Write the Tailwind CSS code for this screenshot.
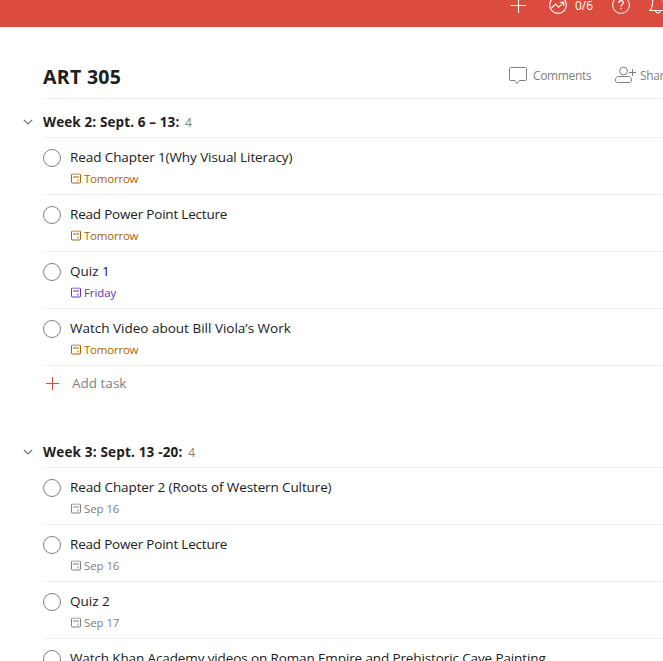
<!DOCTYPE html>
<html lang="en">
<head>
<meta charset="utf-8">
<title>ART 305</title>
<script src="https://cdn.jsdelivr.net/npm/@tailwindcss/browser@4"></script>
</head>
<body class="w-[663px] h-[661px] overflow-hidden bg-white text-[#202020] font-['Open_Sans','Noto_Sans',sans-serif] text-[13.5px]">
<svg class="hidden">
  <symbol id="cal" viewBox="0 0 11 11"><rect x=".5" y=".5" width="9" height="9" rx="1" fill="none" stroke="currentColor"/><path d="M2 3.500h6" stroke="currentColor"/><path d="M6 6h2v2H6z" fill="currentColor" opacity=".5"/></symbol>
  <symbol id="chev" viewBox="0 0 10 6"><path d="M.8.8 5 5 9.200.8" fill="none" stroke="#707070" stroke-width="1.200"/></symbol>
</svg>
<div class="flex h-[661px] flex-col overflow-hidden">
  <header class="relative h-[27px] shrink-0 overflow-hidden bg-[#dc4c3e] text-white">
    <div class="flex h-[12px] items-center pl-[510px]">
      <svg class="h-4 w-4 shrink-0 -translate-y-[1px]" viewBox="0 0 16 16" fill="none" stroke="currentColor" stroke-width="1.1"><path d="M8.500 0v16M.5 8.500h16"/></svg>
      <svg class="ml-[23px] h-[18px] w-[18px] shrink-0 -translate-y-[1px]" viewBox="0 0 18 18" fill="none" stroke="currentColor" stroke-width="1.100"><circle cx="9" cy="9" r="8.400"/><path d="M2.500 12.200 6.600 8l3 3.300L14.500 6.400M10.800 6.300h3.900v3.900"/></svg>
      <span class="ml-2 w-[20px] shrink-0 text-[12px] leading-[12px]">0/6</span>
      <svg class="ml-[17px] h-[18px] w-[18px] shrink-0 -translate-y-[1px]" viewBox="0 0 18 18" fill="none" stroke="currentColor" stroke-width="1"><circle cx="9" cy="9" r="8.400"/><path d="M6.700 7.100C6.700 5.500 7.700 4.700 9 4.700s2.300.8 2.300 2c0 1.700-2.300 1.800-2.300 4M9 12v1.300" stroke-width="1.200"/></svg>
      <svg class="ml-[19px] h-5 w-[18px] shrink-0 -translate-y-[1px]" viewBox="0 0 18 20" fill="none" stroke="currentColor" stroke-width="1.100"><path d="M1 15.500c2-2 2.500-3.500 2.500-8C3.500 4 5.500 2 9 2s5.500 2 5.500 5.500c0 4.500.5 6 2.500 8zM6.500 15.700c.3 1.600 1.200 2.300 2.500 2.300s2.200-.7 2.500-2.300"/></svg>
    </div>
  </header>
  <div class="ml-[43px] mt-[27px] flex h-[45px] w-[700px] shrink-0 items-center border-b border-[#efefef]">
    <h1 class="w-[466px] pt-[1px] text-[19.500px] leading-[26px] font-bold tracking-[0.3px]">ART 305</h1>
    <div class="flex items-center text-[12px] tracking-[-0.35px] text-[#808080]">
      <svg class="h-[18px] w-[18px]" viewBox="0 0 18 18" fill="none" stroke="currentColor"><path d="M1.500.5h15q1 0 1 1v11q0 1-1 1h-6L8 16.600l-2-3.100H1.500q-1 0-1-1v-11q0-1 1-1z"/></svg>
      <span class="ml-[6px] w-[59px]">Comments</span>
      <svg class="ml-[23px] h-[18px] w-[22px] -translate-y-[1px]" viewBox="0 0 22 18" fill="none" stroke="currentColor"><circle cx="8.500" cy="5" r="3.900"/><path d="M.5 14c0-2.500 1.500-3.500 3-3.500h10c1.500 0 3 1 3 3.500 0 2-1 2.500-2 2.500h-12c-1 0-2-.5-2-2.500zM17.500 3v7M14 6.500h7"/></svg>
      <span class="ml-[3px]">Share</span>
    </div>
  </div>

  <section class="ml-[23px] w-[700px] shrink-0">
    <div class="flex h-[39px] items-end">
      <svg class="mb-[13px] h-[6px] w-[10px]"><use href="#chev"/></svg>
      <h2 class="ml-[10px] h-full flex-1 border-b border-[#efefef] pt-[13px] text-[13.500px] leading-[20px] font-bold tracking-[0.12px]">Week 2: Sept. 6 – 13: <span class="ml-[2px] text-[12px] font-normal text-[#808080]">4</span></h2>
    </div>
    <ul class="ml-5">
      <li class="flex h-[57px] border-b border-[#efefef] pt-[11px]"><i class="h-[18px] w-[18px] rounded-full border border-[#808080]"></i><div class="ml-[9px]"><p class="-mt-[2px] leading-[20px] tracking-[-0.09px]">Read Chapter 1(Why Visual Literacy)</p><p class="mt-[4px] flex items-center pl-[1px] text-[11.500px] leading-[16px] tracking-[-0.22px] text-[#ad6200]"><svg class="mr-[2px] h-[11px] w-[11px] -translate-y-[0.5px]"><use href="#cal"/></svg>Tomorrow</p></div></li>
      <li class="flex h-[57px] border-b border-[#efefef] pt-[11px]"><i class="h-[18px] w-[18px] rounded-full border border-[#808080]"></i><div class="ml-[9px]"><p class="-mt-[2px] leading-[20px] tracking-[-0.2px]">Read Power Point Lecture</p><p class="mt-[4px] flex items-center pl-[1px] text-[11.500px] leading-[16px] tracking-[-0.22px] text-[#ad6200]"><svg class="mr-[2px] h-[11px] w-[11px] -translate-y-[0.5px]"><use href="#cal"/></svg>Tomorrow</p></div></li>
      <li class="flex h-[57px] border-b border-[#efefef] pt-[11px]"><i class="h-[18px] w-[18px] rounded-full border border-[#808080]"></i><div class="ml-[9px]"><p class="-mt-[2px] leading-[20px]">Quiz 1</p><p class="mt-[4px] flex items-center pl-[1px] text-[11.500px] leading-[16px] tracking-[-0.1px] text-[#692fc2]"><svg class="mr-[2px] h-[11px] w-[11px] -translate-y-[0.5px]"><use href="#cal"/></svg>Friday</p></div></li>
      <li class="flex h-[57px] border-b border-[#efefef] pt-[11px]"><i class="h-[18px] w-[18px] rounded-full border border-[#808080]"></i><div class="ml-[9px]"><p class="-mt-[2px] leading-[20px]">Watch Video about Bill Viola’s Work</p><p class="mt-[4px] flex items-center pl-[1px] text-[11.500px] leading-[16px] tracking-[-0.22px] text-[#ad6200]"><svg class="mr-[2px] h-[11px] w-[11px] -translate-y-[0.5px]"><use href="#cal"/></svg>Tomorrow</p></div></li>
    </ul>
    <div class="ml-5 flex h-[35px] items-center pl-[3px] text-[#808080]">
      <svg class="h-[13px] w-[13px]" viewBox="0 0 13 13" stroke="#dc4c3e"><path d="M6.500 0v13M0 6.500h13"/></svg>
      <span class="ml-[13px]">Add task</span>
    </div>
  </section>

  <section class="ml-[23px] mt-[28px] w-[700px] shrink-0">
    <div class="flex h-[39px] items-end">
      <svg class="mb-[13px] h-[6px] w-[10px]"><use href="#chev"/></svg>
      <h2 class="ml-[10px] h-full flex-1 border-b border-[#efefef] pt-[13px] text-[13.500px] leading-[20px] font-bold tracking-[0.18px]">Week 3: Sept. 13 -20: <span class="ml-[2px] text-[12px] font-normal text-[#808080]">4</span></h2>
    </div>
    <ul class="ml-5">
      <li class="flex h-[57px] border-b border-[#efefef] pt-[11px]"><i class="h-[18px] w-[18px] rounded-full border border-[#808080]"></i><div class="ml-[9px]"><p class="-mt-[2px] leading-[20px] tracking-[-0.12px]">Read Chapter 2 (Roots of Western Culture)</p><p class="mt-[4px] flex items-center pl-[1px] text-[11.500px] leading-[16px] tracking-[-0.1px] text-[#808080]"><svg class="mr-[2px] h-[11px] w-[11px] -translate-y-[0.5px]"><use href="#cal"/></svg>Sep 16</p></div></li>
      <li class="flex h-[57px] border-b border-[#efefef] pt-[11px]"><i class="h-[18px] w-[18px] rounded-full border border-[#808080]"></i><div class="ml-[9px]"><p class="-mt-[2px] leading-[20px] tracking-[-0.2px]">Read Power Point Lecture</p><p class="mt-[4px] flex items-center pl-[1px] text-[11.500px] leading-[16px] tracking-[-0.1px] text-[#808080]"><svg class="mr-[2px] h-[11px] w-[11px] -translate-y-[0.5px]"><use href="#cal"/></svg>Sep 16</p></div></li>
      <li class="flex h-[57px] border-b border-[#efefef] pt-[11px]"><i class="h-[18px] w-[18px] rounded-full border border-[#808080]"></i><div class="ml-[9px]"><p class="-mt-[2px] leading-[20px]">Quiz 2</p><p class="mt-[4px] flex items-center pl-[1px] text-[11.500px] leading-[16px] tracking-[-0.1px] text-[#808080]"><svg class="mr-[2px] h-[11px] w-[11px] -translate-y-[0.5px]"><use href="#cal"/></svg>Sep 17</p></div></li>
      <li class="flex h-[57px] border-b border-[#efefef] pt-[11px]"><i class="h-[18px] w-[18px] rounded-full border border-[#808080]"></i><div class="ml-[9px]"><p class="-mt-[2px] leading-[20px] tracking-[-0.12px]">Watch Khan Academy videos on Roman Empire and Prehistoric Cave Painting</p></div></li>
    </ul>
  </section>
</div>
</body>
</html>
